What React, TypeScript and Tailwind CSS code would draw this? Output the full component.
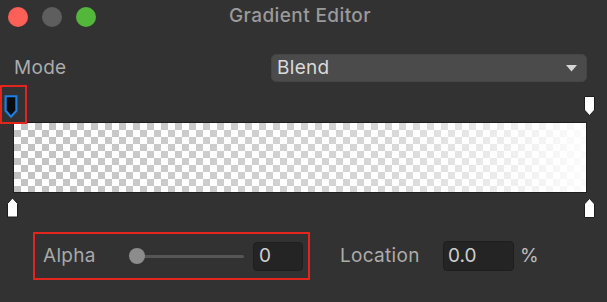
import React from "react";

function DownMarker({ selected }: { selected?: boolean }) {
  return (
    <svg viewBox="0 0 13 22" className="w-full h-full">
      <path
        d="M1.5 1.5 H11.5 V15 L6.5 20.5 L1.5 15 Z"
        fill={selected ? "#0b0b0b" : "#ffffff"}
        stroke={selected ? "#1b7fe3" : "#1c1c1c"}
        strokeWidth={selected ? 2 : 1}
        strokeLinejoin="miter"
      />
    </svg>
  );
}

function UpMarker() {
  return (
    <svg viewBox="0 0 13 22" className="w-full h-full">
      <path
        d="M6.5 1.5 L11.5 7 V20.5 H1.5 V7 Z"
        fill="#ffffff"
        stroke="#1c1c1c"
        strokeWidth={1}
      />
    </svg>
  );
}

export default function App() {
  return (
    <div className="w-[607px] h-[302px] bg-[#323232] overflow-hidden flex flex-col font-['Inter',sans-serif]">
      {/* Title bar */}
      <div className="h-[33px] flex items-center pl-[8px] shrink-0">
        <div className="flex gap-[14px]">
          <span className="w-[20px] h-[20px] rounded-full bg-[#fe5f57]" />
          <span className="w-[20px] h-[20px] rounded-full bg-[#5e5e5e]" />
          <span className="w-[20px] h-[20px] rounded-full bg-[#52b73a]" />
        </div>
        <div className="flex-1 text-center pr-[103px] text-[19px] font-medium text-[#9a9a9a] tracking-[0.4px]">
          Gradient Editor
        </div>
      </div>

      {/* Mode row */}
      <div className="flex items-center mt-[21px] h-[28px] pl-[14px] shrink-0">
        <span className="w-[257px] text-[19px] text-[#ababab] tracking-[0.3px]">Mode</span>
        <div className="w-[316px] h-full rounded-[5px] bg-[#4b4b4b] border border-[#444] flex items-center justify-between pl-[5px] pr-[9px]">
          <span className="text-[19px] text-[#dadada] tracking-[0.3px]">Blend</span>
          <svg width="11" height="7" viewBox="0 0 11 7">
            <path d="M0 0 H11 L5.5 6.5 Z" fill="#d6d6d6" />
          </svg>
        </div>
      </div>

      {/* Gradient section */}
      <div className="mt-[2px] flex flex-col shrink-0">
        <div className="relative h-[38px]">
          <div className="absolute left-0 top-[1px] w-[27px] h-[39px] border-2 border-[#e3251e] z-10" />
          <div className="absolute left-[4px] top-[9px] w-[14px] h-[27px]">
            <DownMarker selected />
          </div>
          <div className="absolute left-[583px] top-[11px] w-[13px] h-[22px]">
            <DownMarker />
          </div>
        </div>
        <div className="ml-[13px] w-[574px] h-[71px] border border-[#1e1e1e] bg-[conic-gradient(#c2c2c2_25%,#ffffff_0_50%,#c2c2c2_0_75%,#ffffff_0)] bg-[length:14px_14px]">
          <div className="w-full h-full bg-linear-to-r from-white/0 via-white/35 via-65% to-white/95" />
        </div>
        <div className="relative h-[27px]">
          <div className="absolute left-[6px] top-[3px] w-[13px] h-[23px]">
            <UpMarker />
          </div>
          <div className="absolute left-[583px] top-[4px] w-[13px] h-[22px]">
            <UpMarker />
          </div>
        </div>
      </div>

      {/* Alpha / Location row */}
      <div className="flex items-center mt-[12px] h-[48px] shrink-0">
        <div className="ml-[33px] w-[277px] h-full border-2 border-[#e3251e] flex items-center pl-[8px]">
          <span className="w-[86px] text-[19px] text-[#a9a9a9] tracking-[0.3px]">Alpha</span>
          <div className="relative w-[116px] h-[16px] flex items-center">
            <div className="ml-[8px] w-[107px] h-[3px] bg-[#565656] rounded-full" />
            <div className="absolute left-0 top-0 w-[16px] h-[16px] rounded-full bg-[#8c8c8c]" />
          </div>
          <div className="ml-[8px] w-[50px] h-[29px] rounded-[4px] bg-[#242424] border border-[#1e1e1e] flex items-center pl-[5px]">
            <span className="text-[19px] text-[#cfcfcf]">0</span>
          </div>
        </div>
        <span className="ml-[30px] w-[103px] text-[19px] text-[#acacac] tracking-[0.3px]">Location</span>
        <div className="w-[71px] h-[30px] rounded-[4px] bg-[#242424] border border-[#1e1e1e] flex items-center pl-[4px]">
          <span className="text-[19px] text-[#cfcfcf]">0.0</span>
        </div>
        <span className="ml-[6px] text-[19px] text-[#bdbdbd]">%</span>
      </div>
    </div>
  );
}
